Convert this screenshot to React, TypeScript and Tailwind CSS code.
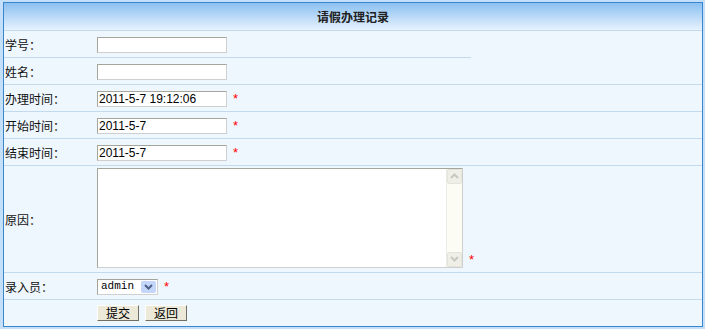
import React from "react";

const cjk = "font-['SimSun','Noto_Sans_CJK_SC',sans-serif]";

function Star() {
  return <span className="ml-[6px] text-[13px] leading-none font-['Liberation_Sans',sans-serif] text-[#ff0000]">*</span>;
}

function TextInput({ value = "" }: { value?: string }) {
  return (
    <input
      defaultValue={value}
      className="box-border h-[16px] w-[130px] border border-t-[#a5a59c] border-l-[#a5a59c] border-b-[#cfcfcf] border-r-[#cfcfcf] bg-white px-[1px] font-['Liberation_Sans',sans-serif] text-[12px] leading-none text-black outline-none"
    />
  );
}

function Row({
  label,
  children,
  line = "full",
  className = "h-[27px]",
}: {
  label?: string;
  children?: React.ReactNode;
  line?: "full" | "short" | "none";
  className?: string;
}) {
  return (
    <div className={`relative flex items-center ${className}`}>
      <div className={`w-[93px] shrink-0 pl-[1px] text-[12px] text-[#111] ${cjk}`}>{label}</div>
      <div className="flex flex-1 items-center">{children}</div>
      {line !== "none" && (
        <div
          className={`absolute bottom-0 left-0 h-[1px] bg-[#c3daee] ${line === "short" ? "w-[467px]" : "w-full"}`}
        />
      )}
    </div>
  );
}

function Chevron({ up }: { up?: boolean }) {
  return (
    <svg width="9" height="6" viewBox="0 0 9 6">
      <path
        d={up ? "M1 5 L4.5 1.5 L8 5" : "M1 1 L4.5 4.5 L8 1"}
        fill="none"
        stroke="currentColor"
        strokeWidth="2"
      />
    </svg>
  );
}

function Btn({ children }: { children: React.ReactNode }) {
  return (
    <button
      className={`box-border flex h-[16px] w-[42px] items-center justify-center border border-t-white border-l-white border-b-[#716f64] border-r-[#716f64] bg-[#ece9d8] text-[12px] leading-none text-black ${cjk}`}
    >
      {children}
    </button>
  );
}

export default function App() {
  return (
    <div className="h-[329px] w-[705px] bg-[#c3dff9] pl-[3px] pt-[2px]">
      <div className="box-border flex h-[325px] w-[700px] flex-col border border-[#3a86cc] bg-[#eff7fe]">
        {/* Title */}
        <div className="relative flex h-[28px] shrink-0 items-center justify-center bg-gradient-to-b from-[#8bc0f1] to-[#eaf4fd]">
          <span className={`text-[12px] font-bold text-[#222] ${cjk}`}>请假办理记录</span>
          <div className="absolute bottom-0 left-0 h-[1px] w-full bg-[#c3daee]" />
        </div>

        <Row label="学号：" line="short">
          <TextInput />
        </Row>
        <Row label="姓名：">
          <TextInput />
        </Row>
        <Row label="办理时间：">
          <TextInput value="2011-5-7 19:12:06" />
          <Star />
        </Row>
        <Row label="开始时间：">
          <TextInput value="2011-5-7" />
          <Star />
        </Row>
        <Row label="结束时间：">
          <TextInput value="2011-5-7" />
          <Star />
        </Row>

        {/* Reason */}
        <Row label="原因：" className="h-[107px]">
          <div className="flex items-end pb-[4px]">
            <div className="box-border flex h-[100px] w-[366px] border border-t-[#a5a59c] border-l-[#a5a59c] border-b-[#cfcfcf] border-r-[#cfcfcf] bg-white">
              <textarea className="h-full flex-1 resize-none bg-white outline-none" />
              <div className="flex w-[16px] flex-col justify-between border-l border-[#ecece4] bg-[#fcfcf4]">
                <div className="flex h-[15px] items-center justify-center rounded-[2px] border border-[#e4e4dc] bg-[#efefe7] text-[#c8c8c0]">
                  <Chevron up />
                </div>
                <div className="flex h-[15px] items-center justify-center rounded-[2px] border border-[#e4e4dc] bg-[#efefe7] text-[#c8c8c0]">
                  <Chevron />
                </div>
              </div>
            </div>
            <span className="mb-[-2px]">
              <Star />
            </span>
          </div>
        </Row>

        <Row label="录入员：">
          <div className="box-border flex h-[16px] w-[61px] items-center justify-between border border-t-[#a5a59c] border-l-[#a5a59c] border-b-[#cfcfcf] border-r-[#cfcfcf] bg-white pr-[1px] pl-[3px]">
            <span className="font-['Liberation_Mono',monospace] text-[11px] leading-none text-black">admin</span>
            <div className="flex h-[12px] w-[15px] items-center justify-center rounded-[2px] bg-[#c4d6fa] text-[#4d6185]">
              <Chevron />
            </div>
          </div>
          <Star />
        </Row>

        <Row line="none" className="h-[26px]">
          <div className="flex gap-[6px]">
            <Btn>提交</Btn>
            <Btn>返回</Btn>
          </div>
        </Row>
      </div>
    </div>
  );
}
